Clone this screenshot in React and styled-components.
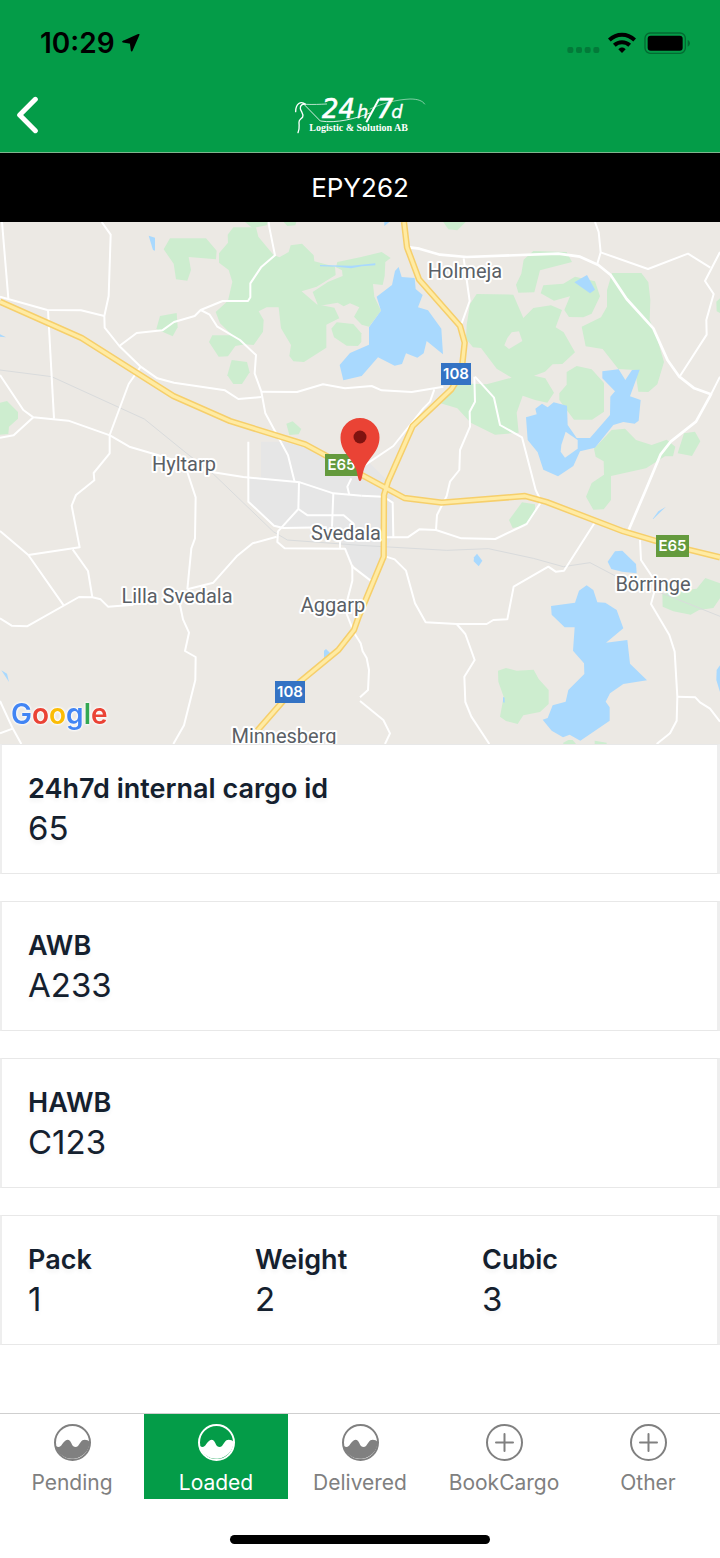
import React from "react";
import styled, { createGlobalStyle } from "styled-components";

const GREEN = "#049c48";
const SANS = 'Inter, "Liberation Sans", sans-serif';

const GlobalStyle = createGlobalStyle`
  * { box-sizing: border-box; }
  body { margin: 0; background: #fff; font-family: ${SANS}; }
`;

const Screen = styled.div`
  display: flex;
  flex-direction: column;
  min-height: 100vh;
`;

const TopArea = styled.header`
  background: ${GREEN};
  border-bottom: 1px solid #7fb58f;
`;

const StatusBar = styled.div`
  display: flex;
  align-items: center;
  justify-content: space-between;
  height: 86px;
  padding: 0 30px 0 40px;
`;

const StatusGroup = styled.div`
  display: flex;
  align-items: center;
  gap: ${(p) => p.$gap}px;
`;

const Clock = styled.time`
  font-size: 28px;
  line-height: 32px;
  font-weight: 600;
  color: #000;
`;

const HeaderRow = styled.div`
  display: grid;
  grid-template-columns: 1fr auto 1fr;
  align-items: center;
  height: 66px;
  padding: 0 12px 8px;
`;

const BackButton = styled.button`
  display: flex;
  justify-self: start;
  padding: 4px;
  border: 0;
  background: none;
  cursor: pointer;
`;

const Title = styled.h1`
  margin: 0;
  padding-top: 1px;
  background: #000;
  color: #fff;
  font-size: 26px;
  line-height: 68px;
  font-weight: 400;
  text-align: center;
`;

const MapArea = styled.svg`
  display: block;
  width: 100%;
  height: 522px;
  background: #ece9e4;
`;

const Main = styled.main`
  flex: 1;
  display: flex;
  flex-direction: column;
  gap: 27px;
  padding-bottom: 40px;
`;

const Card = styled.dl`
  display: grid;
  grid-template-columns: repeat(${(p) => p.$columns}, 1fr);
  margin: 0;
  padding: 27px 8px 23px 26px;
  border: 1px solid #e8e8e8;
  border-left: 2px solid #eee;
  border-right: 3px solid #eee;
  color: #14202e;
  text-shadow: 0 3px 4px rgba(20, 32, 46, 0.05);
`;

const Field = styled.div``;

const FieldLabel = styled.dt`
  font-size: 27px;
  line-height: 34px;
  font-weight: 600;
`;

const FieldValue = styled.dd`
  margin: 0;
  font-size: 33px;
  line-height: 44px;
`;

const TabBar = styled.nav`
  display: grid;
  grid-template-columns: repeat(5, 1fr);
  border-top: 1px solid #cfcfcf;
`;

const Tab = styled.button`
  display: flex;
  flex-direction: column;
  align-items: center;
  gap: 8px;
  padding: 10px 0 2px;
  border: 0;
  background: ${(p) => (p.$active ? GREEN : "#fff")};
  color: ${(p) => (p.$active ? "#fff" : "#808080")};
  font-family: ${SANS};
  font-size: 21px;
  line-height: 28px;
  cursor: pointer;
`;

const HomeArea = styled.footer`
  display: flex;
  justify-content: center;
  padding: 36px 0 14px;
`;

const HomeIndicator = styled.div`
  width: 36%;
  height: 9px;
  border-radius: 5px;
  background: #000;
`;

const PlaceName = styled.text`
  font-family: Roboto, "Liberation Sans", sans-serif;
  font-size: 20px;
  fill: #5a5f66;
  stroke: #fff;
  stroke-width: 4px;
  stroke-linejoin: round;
  paint-order: stroke;
  text-anchor: middle;
`;

const ShieldText = styled.text`
  font-family: ${SANS};
  font-size: 15px;
  font-weight: 600;
  fill: #fff;
  text-anchor: middle;
`;

const GoogleText = styled.text`
  font-family: ${SANS};
  font-size: 28px;
  font-weight: 600;
  filter: drop-shadow(0 0 1px #fff) drop-shadow(0 0 1px #fff);
`;

const LogoNumber = styled.text`
  font-family: "DejaVu Sans", sans-serif;
  font-style: italic;
  font-size: ${(p) => p.$size}px;
  fill: #fff;
  stroke: #fff;
  stroke-width: ${(p) => p.$stroke}px;
`;

const LogoTagline = styled.text`
  font-family: "Liberation Serif", serif;
  font-weight: 700;
  font-size: 30px;
  fill: #fff;
  text-anchor: middle;
`;

function CompanyLogo() {
  return (
    <svg width="132" height="44" viewBox="102 36 396 132" role="img" aria-label="24h/7d Logistic & Solution AB">
      <g fill="none" stroke="#fff" strokeLinecap="round">
        <path d="M107 92 C107 68 122 58 137 70 C128 68 120 72 121 82 C122 92 132 98 128 108 C122 116 117 114 117 124 C117 136 120 140 114 155" strokeWidth="4" />
        <path d="M130 68 L181 120 C230 128 290 112 330 96" strokeWidth="3" opacity="0.85" />
        <path d="M137 70 C160 71 180 70 200 69" strokeWidth="3" opacity="0.7" />
        <path d="M330 84 C370 66 410 56 450 54 C475 54 488 60 494 69" strokeWidth="3" opacity="0.5" />
      </g>
      <LogoNumber x="186" y="110" $size={78} $stroke={2}>24</LogoNumber>
      <LogoNumber x="291" y="110" $size={54} $stroke={1}>h</LogoNumber>
      <path d="M357 54 L319 124" stroke="#fff" strokeWidth="6" />
      <LogoNumber x="350" y="110" $size={78} $stroke={2}>7</LogoNumber>
      <LogoNumber x="394" y="110" $size={54} $stroke={1}>d</LogoNumber>
      <LogoTagline x="296" y="151">Logistic &amp; Solution AB</LogoTagline>
    </svg>
  );
}

function WaveIcon() {
  return (
    <svg width="37" height="37" viewBox="0 0 111 111" aria-hidden="true">
      <circle cx="55.5" cy="55.5" r="52.5" fill="none" stroke="currentColor" strokeWidth="6" />
      <path
        d="M3 62 C8 70 15 70 20 66 C27 59 32 47 41 47 C50 47 52 60 58 67 C62 70 68 70 72 66 C78 58 82 47 92 47 C99 47 103 49 107 53 A52.500 52.500 0 0 1 3 62 Z"
        fill="currentColor"
      />
    </svg>
  );
}

function PlusIcon() {
  return (
    <svg width="37" height="37" viewBox="0 0 111 111" aria-hidden="true">
      <g fill="none" stroke="currentColor" strokeWidth="6" strokeLinecap="round">
        <circle cx="55.5" cy="55.5" r="52.5" />
        <path d="M30 55.500 H81 M55.500 30 V81" />
      </g>
    </svg>
  );
}

const WOODS = [
  "M510 55 L618 55 L650 92 L648 118 L566 111 L573 150 L562 182 L528 178 L521 131 L491 88 Z",
  "M700 22 L768 22 L775 50 L820 104 L838 112 L866 96 L872 76 L906 71 L941 106 L943 124 L1005 140 L1007 165 L950 200 L905 214 L950 253 L1003 263 L1018 295 L979 314 L979 383 L912 426 L880 424 L868 408 L873 375 L843 325 L836 262 L800 262 L776 274 L791 300 L789 335 L761 375 L735 373 L706 378 L684 409 L656 410 L627 366 L637 346 L697 346 L660 310 L647 276 L684 242 L697 185 L686 150 L657 128 L657 100 L684 68 L683 44 Z",
  "M735 6 L803 6 L800 16 L757 24 Z",
  "M851 6 L889 6 L886 16 L862 18 Z",
  "M480 288 L530 279 L533 322 L518 349 L469 327 Z",
  "M695 420 L741 426 L749 457 L726 492 L700 492 L682 466 Z",
  "M859 611 L878 604 L904 627 L896 643 L868 645 Z",
  "M0 548 L21 543 L54 576 L54 596 L27 620 L25 642 L0 644 Z",
  "M1012 126 L1080 112 L1145 96 L1172 114 L1156 126 L1154 168 L1148 195 L1119 192 L1123 230 L1143 272 L1107 320 L1085 314 L1062 290 L1078 262 L1050 250 L1031 259 L1013 248 L955 258 L938 216 L985 185 L1028 168 L1026 151 L1008 142 Z",
  "M1010 307 L1060 312 L1084 340 L1084 366 L1074 378 L1040 377 L1002 352 L994 326 Z",
  "M1330 6 L1397 6 L1372 31 L1345 28 Z",
  "M1571 119 L1600 93 L1700 96 L1716 126 L1620 151 L1603 217 L1555 218 L1548 194 L1564 161 Z",
  "M1630 196 L1690 191 L1725 170 L1785 184 L1800 229 L1775 281 L1750 292 L1707 291 L1693 270 L1710 229 L1662 242 L1622 220 Z",
  "M1430 222 L1540 224 L1570 294 L1600 264 L1653 256 L1686 270 L1667 322 L1691 337 L1725 397 L1687 432 L1658 433 L1635 455 L1602 467 L1636 475 L1662 518 L1642 548 L1605 540 L1568 527 L1550 578 L1556 638 L1485 644 L1412 608 L1372 565 L1319 549 L1372 490 L1460 493 L1535 473 L1490 446 L1443 384 L1419 382 L1398 356 L1400 315 L1410 252 Z",
  "M1836 159 L1924 159 L1945 187 L1951 240 L1949 300 L1970 350 L1992 426 L1972 493 L1945 516 L1915 515 L1905 450 L1855 447 L1808 387 L1757 379 L1745 320 L1803 292 L1821 260 L1821 211 Z",
  "M1700 456 L1730 438 L1775 448 L1812 489 L1812 575 L1776 599 L1722 599 L1678 540 L1678 520 L1700 494 Z",
  "M1782 686 L1835 630 L1875 626 L1908 660 L1955 675 L2000 659 L2026 680 L2019 709 L1995 709 L1938 745 L1833 768 L1833 840 L1811 868 L1780 869 L1758 830 L1775 789 L1812 764 L1811 724 L1787 710 Z",
  "M2052 640 L2085 635 L2101 664 L2076 708 L2033 700 Z",
  "M2160 235 L2149 245 L2150 274 L2160 279 Z",
  "M1566 847 L1605 853 L1606 878 L1580 916 L1538 924 L1527 900 Z",
  "M1987 1122 L2055 1110 L2090 1106 L2116 1074 L2160 1090 L2160 1135 L2140 1164 L2097 1170 L2072 1184 L2020 1174 L1988 1160 Z",
  "M1494 1352 L1518 1344 L1550 1352 L1601 1349 L1616 1377 L1646 1410 L1646 1452 L1620 1476 L1570 1486 L1553 1512 L1518 1503 L1500 1490 L1511 1430 L1495 1385 Z",
  "M1690 1568 L1705 1560 L1718 1560 L1729 1573 L1690 1573 Z",
  "M1784 1562 L1820 1568 L1820 1573 L1784 1573 Z",
];

const CLEARINGS = ["M1522 354 L1535 337 L1557 334 L1567 363 L1527 387 L1513 376 Z"];

const WATERS = [
  "M446 47 L465 53 L465 92 L459 90 Z",
  "M960 135 L1055 137 L1126 130 L1126 136 L1085 139 L1053 145 L1010 140 L960 139 Z",
  "M0 343 L18 352 L0 350 Z",
  "M1153 6 L1168 6 L1153 18 Z",
  "M1196 141 L1205 171 L1244 174 L1247 207 L1268 225 L1254 262 L1284 271 L1324 326 L1329 403 L1280 363 L1271 400 L1252 413 L1218 400 L1206 432 L1184 437 L1134 412 L1085 468 L1030 481 L1019 435 L1050 399 L1107 374 L1107 322 L1143 272 L1130 230 L1176 195 L1185 153 Z",
  "M1723 187 L1761 165 L1785 209 L1770 220 Z",
  "M1807 454 L1856 448 L1876 480 L1896 450 L1919 449 L1890 529 L1922 540 L1916 602 L1904 611 L1870 606 L1840 615 L1785 683 L1740 694 L1720 738 L1674 769 L1630 749 L1613 697 L1583 660 L1578 592 L1610 583 L1606 566 L1626 551 L1643 562 L1661 547 L1701 557 L1703 615 L1730 654 L1770 654 L1830 585 L1831 530 L1845 514 L1807 475 Z",
  "M1422 1012 L1431 1001 L1447 1022 L1436 1039 L1421 1024 Z",
  "M1958 897 L1975 874 L1998 860 L1979 878 L1960 897 Z",
  "M1823 1025 L1845 994 L1867 992 L1908 1032 L1910 1060 L1866 1055 L1834 1047 Z",
  "M1653 1158 L1725 1148 L1737 1112 L1760 1096 L1780 1110 L1792 1147 L1816 1148 L1850 1170 L1870 1225 L1818 1268 L1882 1260 L1890 1331 L1941 1381 L1870 1392 L1830 1420 L1817 1445 L1829 1462 L1829 1502 L1741 1562 L1709 1544 L1689 1552 L1655 1532 L1628 1499 L1643 1494 L1658 1456 L1697 1445 L1705 1410 L1753 1362 L1752 1330 L1719 1292 L1724 1222 L1694 1222 L1655 1184 Z",
  "M972 1292 L978 1287 L991 1300 L989 1308 L972 1316 Z",
  "M4 1351 L21 1361 L27 1386 Z",
  "M2160 1336 L2150 1350 L2149 1380 L2160 1416 Z",
  "M1509 1431 L1514 1433 L1514 1448 L1509 1447 Z",
];

const BLOCKS = [
  "M783 665 L845 665 L915 680 L970 705 L1030 760 L1100 720 L1160 780 L1180 830 L1178 950 L1142 1010 L1112 1082 L1055 1030 L1038 985 L970 925 L830 920 L748 848 L748 775 L783 770 Z",
];

const RAILWAYS = [
  "M0 450 L155 470 L433 597 L560 700 L640 762 L820 935 L862 960 L1080 976 L1340 991 L1465 986 L1600 1015 L1690 1040 L1770 1028 L1850 1070 L2000 1125 L2160 1189",
];

const LANES = [
  "M6 6 L25 235",
  "M305 6 L332 44 L326 228 L313 288 L314 323 L358 378 L422 440 L472 475 L522 488 L675 511 L715 537 L784 531",
  "M0 230 L142 270 L243 271 L313 288",
  "M144 270 L162 596",
  "M358 378 L410 339 L487 331 L522 306 L584 288 L602 270 L668 243 L744 243 L751 232 L751 190 L783 142 L825 106 L808 22 L806 6",
  "M602 270 L629 284 L652 320 L720 360 L768 405 L764 460 L784 515 L796 580 L864 706 L884 786",
  "M784 515 L891 516 L969 493 L1035 505 L1115 498 L1145 511 L1235 516 L1330 500",
  "M0 465 L70 570 L100 592 L205 602 L330 646 L388 680 L470 704 L640 757 L730 771 L900 787 L1000 820 L1085 827",
  "M100 592 L41 646 L0 653",
  "M422 440 L386 492 L329 645 L329 700 L281 759 L283 781 L228 825 L215 857 L239 982 L85 1005",
  "M560 750 L587 832 L585 955 L574 985 L562 1108",
  "M745 665 L745 845 L822 917 L850 924 L980 922",
  "M0 933 L85 1005 L191 1156",
  "M218 988 L264 1053 L277 1132",
  "M0 1195 L35 1217 L81 1219 L237 1131 L277 1132 L302 1138 L324 1160 L400 1154",
  "M562 1108 L640 1088 L710 1009 L758 970 L830 950",
  "M540 1155 L549 1198 L567 1238 L555 1293 L587 1311 L586 1380 L552 1516 L520 1572",
  "M897 787 L895 867 L834 934 L832 966 L854 985 L1035 986 L1057 1040 L1112 1082",
  "M1057 1035 L1057 1082 L1042 1140 L1040 1182 L1063 1240 L1082 1270 L1088 1294 L1100 1314 L1107 1350 L1104 1410 L1080 1432",
  "M895 867 L923 886 L1031 886 L1062 912",
  "M1000 820 L996 920 M1020 960 L1020 986",
  "M1054 775 L1042 800 L1048 825",
  "M1085 827 L1150 830 L1178 848 L1180 950",
  "M1150 952 L1223 952 L1258 928 L1308 930 L1384 955 L1486 957 L1580 912 L1624 845 L1607 810 L1566 652 L1500 615 L1482 533 L1425 470",
  "M1308 930 L1311 885 L1340 828 L1350 785 L1378 750 L1380 690 L1410 620 L1409 575 L1425 545 L1423 470",
  "M1080 745 L1180 678 L1270 565 L1290 545 L1303 508",
  "M1391 115 L1409 243 L1385 310",
  "M1785 6 L1796 36 L1802 97 L1792 131",
  "M1802 97 L1944 147 L2064 101 L2131 143",
  "M2160 96 L2115 183 L2141 222 L2119 300 L2120 344 L2040 468",
  "M2133 523 L2160 470",
  "M1158 1010 L1184 1018 L1218 1052 L1245 1150 L1277 1207 L1370 1212 L1460 1212 L1480 1200 L1522 1198 L1541 1100 L1645 1040 L1667 1055 L1692 1052 L1784 908",
  "M1370 1212 L1396 1242 L1424 1320 L1393 1370 L1396 1446 L1414 1490 L1468 1572",
  "M1920 960 L1923 1020 L1970 1090 L1953 1152 L2008 1245 L2024 1295 L2032 1430 L2030 1502 L2010 1540 L1970 1572",
  "M2032 1430 L2086 1432 L2100 1447 L2130 1466 L2160 1505",
  "M0 1443 L38 1525 L64 1572 M0 1540 L38 1526",
  "M1080 1443 L1150 1500 L1170 1540 L1155 1572",
];

const STREETS = [
  "M1228 82 L1258 86 L1320 104 L1400 111 L1675 101 L1740 110 L1795 135 L1832 165 L1880 237 L1960 325 L2003 421 L2038 470 L2083 505 L2133 523 L2088 605 L2012 665 L1982 703 L1935 815 L1886 930",
];

const HIGHWAYS = [
  "M0 245 L245 354 L520 528 L690 603 L915 673 L1080 762 L1213 834 L1325 848 L1575 828 L1640 846 L1870 934 L1965 962 L2070 990 L2160 1012",
  "M1212 6 L1221 82 L1257 178 L1380 318 L1394 368 L1384 460 L1354 508 L1238 618 L1164 785 L1152 825 L1151 1010 L1076 1190 L1062 1230 L1015 1290 L900 1385 L772 1532",
];

const PLACES = [
  ["Holmeja", 465, 56],
  ["Hyltarp", 184, 249],
  ["Svedala", 346, 318],
  ["Lilla Svedala", 177, 381],
  ["Aggarp", 333, 390],
  ["Börringe", 653, 369],
  ["Minnesberg", 284, 521],
];

const SHIELDS = [
  ["108", 441, 141, 30, "#3473c4"],
  ["E65", 325, 232, 33, "#649a3d"],
  ["E65", 656, 313, 33, "#649a3d"],
  ["108", 275, 459, 30, "#3473c4"],
];

const strokePaths = (list, props) => list.map((d) => <path key={d} d={d} {...props} />);

function CargoMap() {
  return (
    <MapArea viewBox="0 0 720 522" preserveAspectRatio="xMidYMid slice" role="img" aria-label="Map of Svedala">
      <svg width="720" height="522" viewBox="0 6 2160 1566">
        {strokePaths(BLOCKS, { fill: "#e6e6e6" })}
        {strokePaths(WOODS, { fill: "#cdedcf" })}
        {strokePaths(CLEARINGS, { fill: "#ece9e4" })}
        {strokePaths(WATERS, { fill: "#a9d9fe" })}
        <path d="M1697 635 L1733 660 L1733 686 L1695 713 L1682 695 L1684 675 Z" fill="#ece9e4" />
        <g fill="none" strokeLinejoin="round">
          {strokePaths(RAILWAYS, { stroke: "#d9dbdc", strokeWidth: 3 })}
          {strokePaths(LANES, { stroke: "#fff", strokeWidth: 6 })}
          {strokePaths(STREETS, { stroke: "#fff", strokeWidth: 8 })}
          {strokePaths(HIGHWAYS, { stroke: "#f6cf6b", strokeWidth: 19 })}
          {strokePaths(HIGHWAYS, { stroke: "#ffeba3", strokeWidth: 10 })}
        </g>
      </svg>
      {PLACES.map(([name, x, y]) => (
        <PlaceName key={name} x={x} y={y}>{name}</PlaceName>
      ))}
      {SHIELDS.map(([name, x, y, w, fill]) => (
        <g key={x}>
          <rect x={x} y={y} width={w} height="22" fill={fill} />
          <ShieldText x={x + w / 2} y={y + 16}>{name}</ShieldText>
        </g>
      ))}
      <path
        d="M360 259 C358 259 358 253 356 247 C352 236 340.500 230 340.500 215.500 A19.500 19.500 0 0 1 379.500 215.500 C379.500 230 368 236 364 247 C362 253 362 259 360 259 Z"
        fill="#ea4335"
      />
      <circle cx="360" cy="215" r="6.500" fill="#7f1310" />
      <GoogleText x="11" y="502">
        <tspan fill="#4285f4">G</tspan>
        <tspan fill="#ea4335">o</tspan>
        <tspan fill="#fbbc05">o</tspan>
        <tspan fill="#4285f4">g</tspan>
        <tspan fill="#34a853">l</tspan>
        <tspan fill="#ea4335">e</tspan>
      </GoogleText>
    </MapArea>
  );
}

const CARDS = [
  [["24h7d internal cargo id", "65"]],
  [["AWB", "A233"]],
  [["HAWB", "C123"]],
  [["Pack", "1"], ["Weight", "2"], ["Cubic", "3"]],
];

const TABS = [
  ["Pending", WaveIcon],
  ["Loaded", WaveIcon],
  ["Delivered", WaveIcon],
  ["BookCargo", PlusIcon],
  ["Other", PlusIcon],
];

export default function App() {
  return (
    <Screen>
      <GlobalStyle />
      <TopArea>
        <StatusBar>
          <StatusGroup $gap={7}>
            <Clock>10:29</Clock>
            <svg width="18" height="18" viewBox="363 104 54 54" aria-hidden="true">
              <path d="M413 106 L366 127 L389 131 L392 154 Z" stroke="#000" strokeWidth="5" strokeLinejoin="round" />
            </svg>
          </StatusGroup>
          <StatusGroup $gap={8}>
            <svg width="33" height="22" viewBox="83 66 99 66" aria-hidden="true">
              {[84, 110, 136, 162].map((x) => (
                <rect key={x} x={x} y="111" width="18" height="18" rx="6" fill="#037a39" />
              ))}
            </svg>
            <svg width="28" height="22" viewBox="204 66 84 66" aria-hidden="true">
              <g fill="none" stroke="#000" strokeWidth="12">
                <path d="M208 90 C230 69 262 69 284 90" />
                <path d="M223 106 C236 94 256 94 269 106" />
              </g>
              <path d="M235 118 C241 111 251 111 257 118 L246 129 Z" />
            </svg>
            <svg width="46" height="22" viewBox="312 66 138 66" aria-hidden="true">
              <rect x="315" y="69" width="121" height="61" rx="16" fill="none" stroke="#036a32" strokeWidth="4" />
              <rect x="323" y="77" width="105" height="45" rx="9" />
              <path d="M443 90 C452 94 452 106 443 110 Z" fill="#036a32" />
            </svg>
          </StatusGroup>
        </StatusBar>
        <HeaderRow>
          <BackButton aria-label="Back">
            <svg width="23" height="38" viewBox="48 287 69 114">
              <path d="M106 297 L59 344 L106 391" fill="none" stroke="#fff" strokeWidth="15" strokeLinecap="round" strokeLinejoin="round" />
            </svg>
          </BackButton>
          <CompanyLogo />
        </HeaderRow>
      </TopArea>
      <Title>EPY262</Title>
      <CargoMap />
      <Main>
        {CARDS.map((fields) => (
          <Card key={fields[0][0]} $columns={fields.length}>
            {fields.map(([label, value]) => (
              <Field key={label}>
                <FieldLabel>{label}</FieldLabel>
                <FieldValue>{value}</FieldValue>
              </Field>
            ))}
          </Card>
        ))}
      </Main>
      <TabBar>
        {TABS.map(([label, Icon]) => (
          <Tab key={label} $active={label === "Loaded"}>
            <Icon />
            {label}
          </Tab>
        ))}
      </TabBar>
      <HomeArea>
        <HomeIndicator />
      </HomeArea>
    </Screen>
  );
}
